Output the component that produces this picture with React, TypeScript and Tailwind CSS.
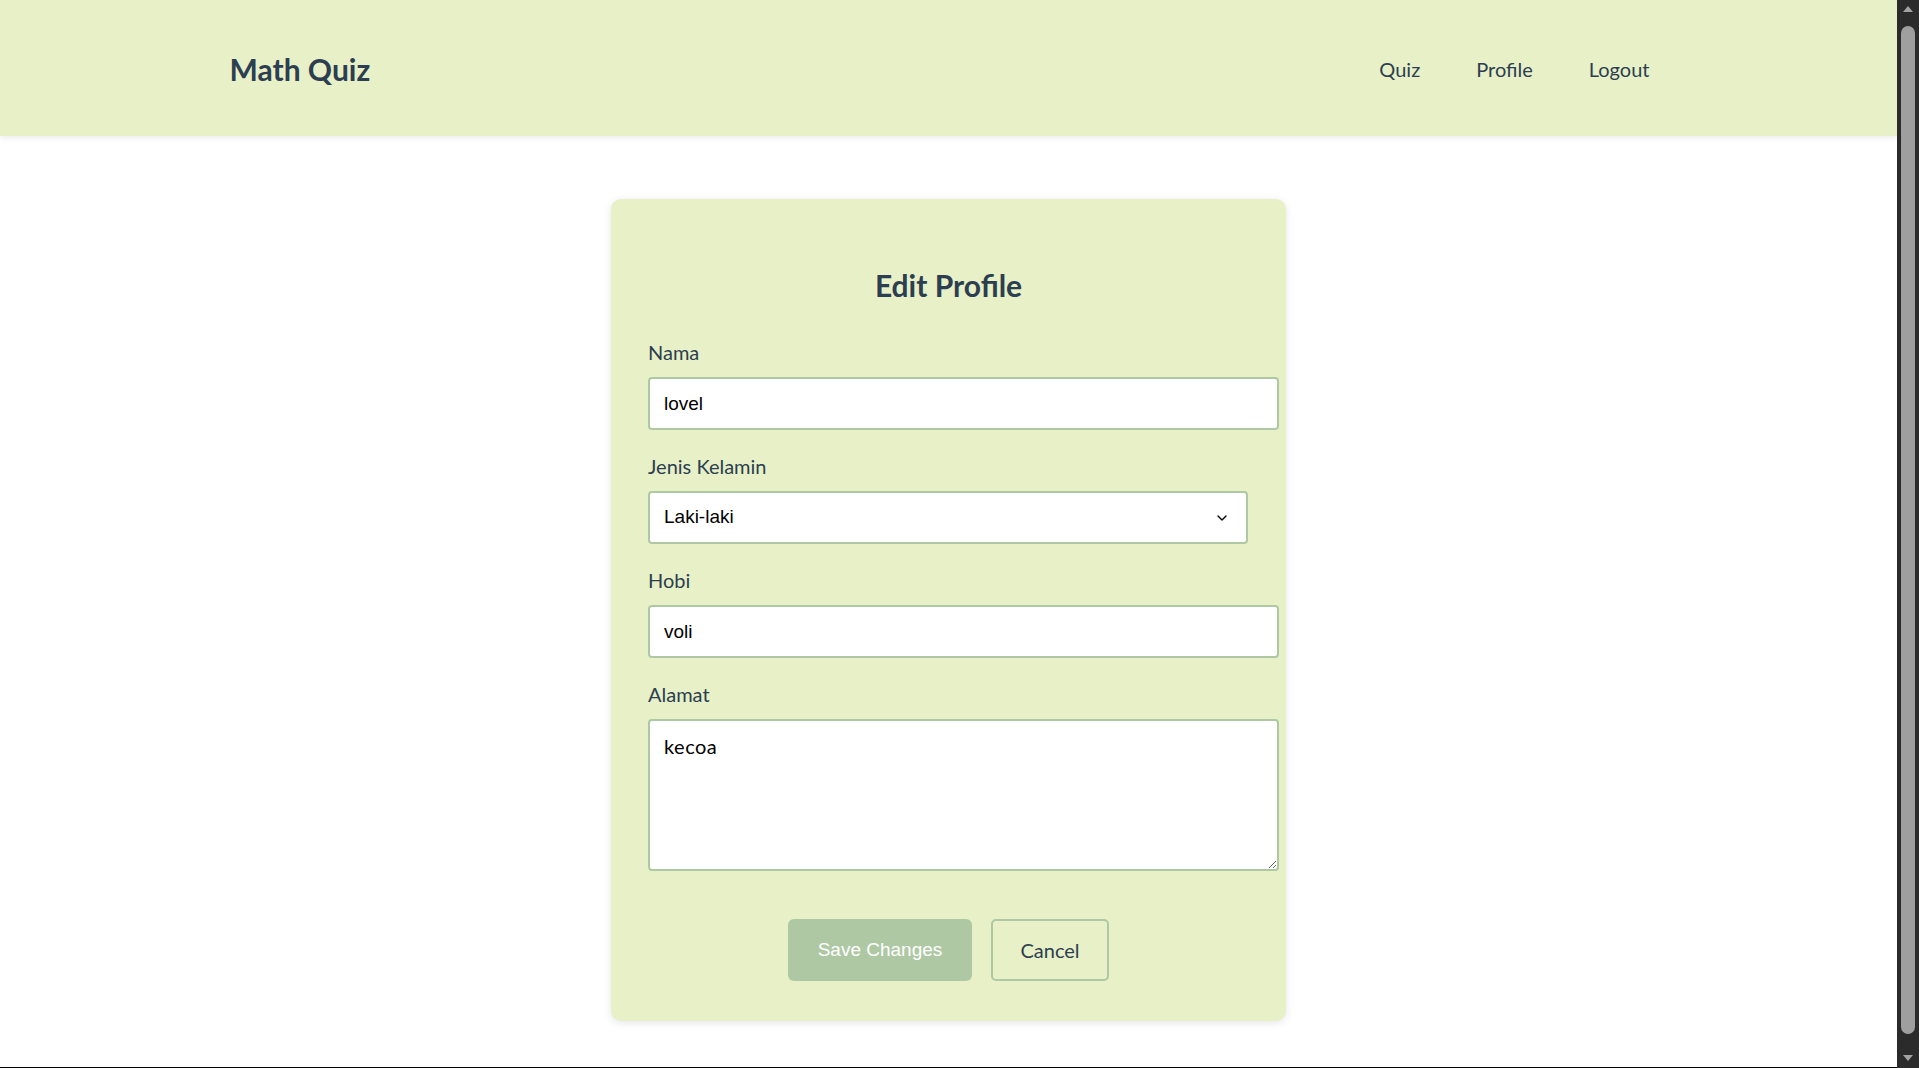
import { ChevronDown } from "lucide-react";

const labelCls = "mb-[10px] block text-[20px] leading-[30px] text-[#2c3e50]";
const inputCls =
  "box-border block h-[53px] w-[631px] rounded-[4px] border-2 border-[#aec8a4] bg-white px-[14px] font-['Liberation_Sans',Arial,sans-serif] text-[19px] text-black outline-none";

function Field({ label, children }: { label: string; children: React.ReactNode }) {
  return (
    <div className="mb-[21px]">
      <label className={labelCls}>{label}</label>
      {children}
    </div>
  );
}

function Scrollbar() {
  return (
    <div className="flex w-[22px] shrink-0 flex-col items-center bg-[#2b2b2b] pt-[5px] pb-[6px]">
      <svg width="12" height="8" viewBox="0 0 12 8" className="shrink-0">
        <path d="M6 1 L11 7 L1 7 Z" fill="#a3a3a3" />
      </svg>
      <div className="mt-[13px] w-[14px] flex-1 rounded-full bg-[#9f9f9f]" />
      <svg width="12" height="8" viewBox="0 0 12 8" className="mt-[20px] shrink-0">
        <path d="M1 1 L11 1 L6 7 Z" fill="#a3a3a3" />
      </svg>
    </div>
  );
}

export default function App() {
  return (
    <div className="flex h-screen overflow-hidden bg-white font-['Lato','Noto_Sans',sans-serif]">
      <div className="flex flex-1 flex-col overflow-hidden border-b border-black">
        <header className="relative z-10 h-[136px] shrink-0 bg-[#e7f0c7] shadow-[0_2px_6px_rgba(0,0,0,0.08)]">
          <div className="mx-auto flex h-full max-w-[1500px] items-center justify-between px-[31px] pt-[2px]">
            <h1 className="text-[30px] font-bold text-[#2c3e50]">Math Quiz</h1>
            <nav className="flex gap-[20px]">
              {["Quiz", "Profile", "Logout"].map((item) => (
                <a key={item} href="#" className="px-[18px] text-[20px] text-[#2c3e50]">
                  {item}
                </a>
              ))}
            </nav>
          </div>
        </header>

        <main className="flex justify-center pt-[63px]">
          <div className="box-border w-[675px] rounded-[10px] bg-[#e7f0c7] px-[37px] pt-[68px] pb-[40px] shadow-[0_2px_8px_rgba(0,0,0,0.1)]">
            <h2 className="mb-[34px] text-center text-[30px] leading-[36px] font-bold text-[#2c3e50]">
              Edit Profile
            </h2>

            <form onSubmit={(e) => e.preventDefault()}>
              <Field label="Nama">
                <input className={inputCls} defaultValue="lovel" />
              </Field>

              <Field label="Jenis Kelamin">
                <div className="relative w-[600px]">
                  <select
                    className="box-border block h-[53px] w-[600px] appearance-none rounded-[4px] border-2 border-[#aec8a4] bg-white px-[14px] font-['Liberation_Sans',Arial,sans-serif] text-[19px] text-black outline-none"
                    defaultValue="Laki-laki"
                  >
                    <option>Laki-laki</option>
                    <option>Perempuan</option>
                  </select>
                  <ChevronDown
                    size={16}
                    strokeWidth={2}
                    className="pointer-events-none absolute top-1/2 right-[18px] -translate-y-1/2 text-black"
                  />
                </div>
              </Field>

              <Field label="Hobi">
                <input className={inputCls} defaultValue="voli" />
              </Field>

              <div>
                <label className={labelCls}>Alamat</label>
                <textarea
                  className="box-border block h-[152px] w-[631px] rounded-[4px] border-2 border-[#aec8a4] bg-white px-[14px] pt-[10px] font-['Lato','Noto_Sans',sans-serif] text-[20px] tracking-[0.5px] text-black outline-none"
                  defaultValue="kecoa"
                />
              </div>

              <div className="mt-[48px] flex justify-center gap-[19px]">
                <button
                  type="submit"
                  className="h-[62px] w-[184px] rounded-[6px] bg-[#aec8a4] font-['Liberation_Sans',Arial,sans-serif] text-[19px] text-white"
                >
                  Save Changes
                </button>
                <button
                  type="button"
                  className="box-border h-[62px] w-[118px] rounded-[5px] border-2 border-[#aec8a4] bg-transparent text-[20px] text-[#2c3e50]"
                >
                  Cancel
                </button>
              </div>
            </form>
          </div>
        </main>
      </div>
      <Scrollbar />
    </div>
  );
}
